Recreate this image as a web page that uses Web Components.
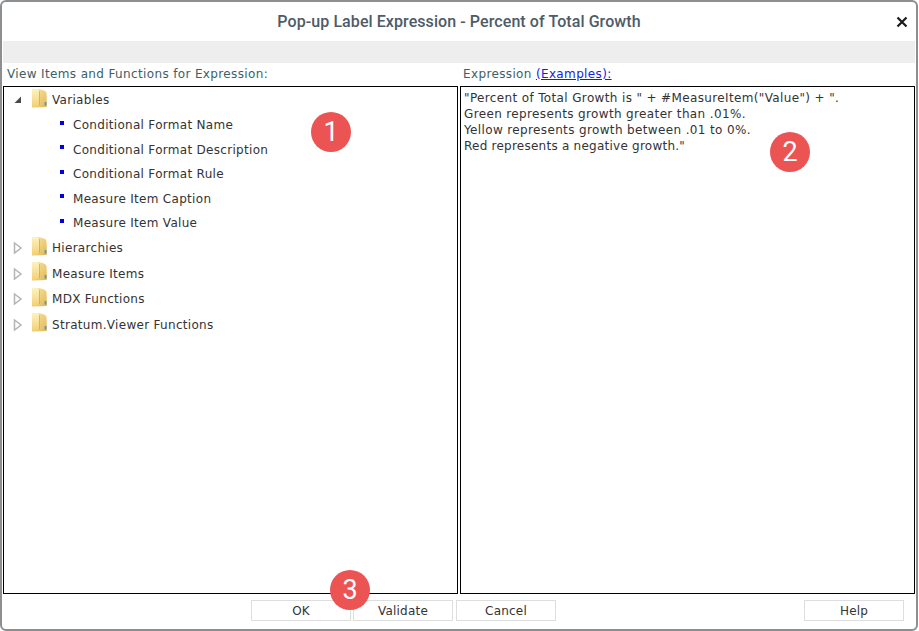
<!DOCTYPE html>
<html>
<head>
<meta charset="utf-8">
<title>Pop-up Label Expression</title>
<style>
  html, body { margin: 0; padding: 0; background: #fff; }
  body { width: 919px; height: 631px; overflow: hidden; font-family: "DejaVu Sans", sans-serif; }
</style>
</head>
<body>

<pop-dialog heading="Pop-up Label Expression - Percent of Total Growth">
  <expr-pane slot="left" label="View Items and Functions for Expression:" style="--label-pad:4px">
    <tree-node icon="open" text="Variables"></tree-node>
    <tree-leaf>Conditional Format Name</tree-leaf>
    <tree-leaf>Conditional Format Description</tree-leaf>
    <tree-leaf>Conditional Format Rule</tree-leaf>
    <tree-leaf>Measure Item Caption</tree-leaf>
    <tree-leaf>Measure Item Value</tree-leaf>
    <tree-node icon="closed" text="Hierarchies"></tree-node>
    <tree-node icon="closed" text="Measure Items"></tree-node>
    <tree-node icon="closed" text="MDX Functions"></tree-node>
    <tree-node icon="closed" text="Stratum.Viewer Functions"></tree-node>
  </expr-pane>
  <expr-pane slot="right" label="Expression " link="(Examples):" style="--label-pad:3px">
    <expr-text>
      <expr-line>"Percent of Total Growth is " + #MeasureItem("Value") + ".</expr-line>
      <expr-line>Green represents growth greater than .01%.</expr-line>
      <expr-line>Yellow represents growth between .01 to 0%.</expr-line>
      <expr-line style="letter-spacing:.24px">Red represents a negative growth."</expr-line>
    </expr-text>
  </expr-pane>
  <dlg-button slot="actions">OK</dlg-button>
  <dlg-button slot="actions">Validate</dlg-button>
  <dlg-button slot="actions" style="margin-left:1px">Cancel</dlg-button>
  <dlg-button slot="help">Help</dlg-button>
  <step-badge slot="badges" style="left:309px;top:110px">1</step-badge>
  <step-badge slot="badges" style="left:768px;top:130px">2</step-badge>
  <step-badge slot="badges" style="left:328px;top:568px">3</step-badge>
</pop-dialog>

<script>
class PopDialog extends HTMLElement {
  constructor() {
    super();
    this.attachShadow({ mode: "open" });
    const heading = this.getAttribute("heading") || "";
    this.shadowRoot.innerHTML = `
      <style>
        :host {
          display: flex; flex-direction: column; position: relative;
          box-sizing: border-box; width: 918px; height: 631px;
          border: 2px solid #8b8f92; border-radius: 6px; background: #fff;
        }
        .title {
          height: 39px; flex: none; display: flex; align-items: center; justify-content: center;
          font: 500 16px Roboto, sans-serif; color: #4d5b67; letter-spacing: .08px; position: relative;
        }
        .close { position: absolute; right: 8px; top: 14px; width: 12px; height: 12px; }
        .band { height: 22px; flex: none; background: #eeeeee; margin: 0 1px 0 1px; }
        .panes { flex: 1; min-height: 0; display: flex; gap: 2px; padding: 0 1px; }
        .footer { height: 35px; flex: none; display: flex; align-items: flex-start; padding: 6px 12px 0 249px; box-sizing: border-box; }
        .footer .actions { display: flex; gap: 2px; }
        .footer .help { margin-left: auto; }
      </style>
      <div class="title">
        <span>${heading}</span>
        <svg class="close" viewBox="0 0 12 12"><path d="M1.5 1.5 L10.5 10.5 M10.5 1.5 L1.5 10.5" stroke="#1b1b1b" stroke-width="2.2" fill="none"/></svg>
      </div>
      <div class="band"></div>
      <div class="panes"><slot name="left"></slot><slot name="right"></slot></div>
      <div class="footer">
        <div class="actions"><slot name="actions"></slot></div>
        <div class="help"><slot name="help"></slot></div>
      </div>
      <slot name="badges"></slot>
    `;
  }
}

class ExprPane extends HTMLElement {
  constructor() {
    super();
    this.attachShadow({ mode: "open" });
    const label = this.getAttribute("label") || "";
    const link = this.getAttribute("link");
    this.shadowRoot.innerHTML = `
      <style>
        :host { display: flex; flex-direction: column; width: 455px; min-height: 0; }
        .label {
          height: 23px; flex: none; box-sizing: border-box; padding: 3px 0 0 var(--label-pad, 4px); white-space: pre;
          font: 12px/17px "DejaVu Sans", sans-serif; color: #3c6165; letter-spacing: .36px;
        }
        a { color: #1a1ae0; text-decoration: underline; }
        .box { flex: 1; min-height: 0; border: 1px solid #000; box-sizing: border-box; overflow: hidden; padding-top: .3px; }
      </style>
      <div class="label">${label}${link ? `<a>${link}</a>` : ""}</div>
      <div class="box"><slot></slot></div>
    `;
  }
}

class TreeNode extends HTMLElement {
  constructor() {
    super();
    this.attachShadow({ mode: "open" });
    const open = this.getAttribute("icon") === "open";
    const text = this.getAttribute("text") || "";
    const arrow = open
      ? `<path d="M1.5 9 L8 2.5 L8 9 Z" fill="#4a4a4a"/>`
      : `<path d="M1.5 1 L8 6 L1.5 11 Z" fill="#fff" stroke="#b4b4b4" stroke-width="1.5"/>`;
    this.shadowRoot.innerHTML = `
      <style>
        :host {
          display: flex; align-items: center; height: 25.6px; padding-left: 9px;
          font: 12px "DejaVu Sans", sans-serif; color: #333; letter-spacing: .3px;
        }
        .arrow { width: 10px; height: 12px; flex: none; margin-right: 8px; }
        .folder { width: 17px; height: 21px; flex: none; margin-right: 4px; margin-top: -4px; }
      </style>
      <svg class="arrow" viewBox="0 0 10 12">${arrow}</svg>
      <svg class="folder" viewBox="0 0 17 21">
        <defs>
          <linearGradient id="back" x1="0" y1="0" x2="1" y2="1">
            <stop offset="0" stop-color="#fbe9a4"/>
            <stop offset="1" stop-color="#e2b755"/>
          </linearGradient>
          <linearGradient id="front" x1="0" y1="0" x2="0" y2="1">
            <stop offset="0" stop-color="#fdf3c0"/>
            <stop offset="1" stop-color="#f2cf72"/>
          </linearGradient>
        </defs>
        <path d="M1 2 Q1 1 2 1 L8 1 L13 2.5 Q15 3 15.5 5 L16 18 Q16 19 15 19 L2 19.5 Q1 19.5 1 18.5 Z" fill="url(#back)"/>
        <path d="M1 2 Q1 1 2 1 L6.5 1 L8.5 3 L8.5 17 L2 19.5 Q1 19.5 1 18.5 Z" fill="url(#front)"/>
        <path d="M8.5 3 L8.5 17" stroke="#cfa548" stroke-width="1" opacity=".7"/>
        <path d="M14.5 14 L14.5 17.5" stroke="#4d9ad6" stroke-width="1.8"/>
      </svg>
      <span>${text}</span>
    `;
  }
}

class TreeLeaf extends HTMLElement {
  constructor() {
    super();
    this.attachShadow({ mode: "open" });
    this.shadowRoot.innerHTML = `
      <style>
        :host {
          display: flex; align-items: center; height: 24.5px; padding-left: 56px;
          font: 12px "DejaVu Sans", sans-serif; color: #333; letter-spacing: .3px;
        }
        i { width: 4px; height: 4px; background: #0000d8; flex: none; margin: -5px 9px 0 0; }
      </style>
      <i></i><span><slot></slot></span>
    `;
  }
}

class ExprText extends HTMLElement {
  constructor() {
    super();
    this.attachShadow({ mode: "open" });
    this.shadowRoot.innerHTML = `
      <style>
        :host {
          display: flex; flex-direction: column; align-items: flex-start; padding: 3px 0 0 3px;
          font: 12px/16px "DejaVu Sans", sans-serif; color: #333; letter-spacing: .36px;
        }
      </style>
      <slot></slot>
    `;
  }
}

class ExprLine extends HTMLElement {
  constructor() {
    super();
    this.attachShadow({ mode: "open" });
    this.shadowRoot.innerHTML = `<style>:host { display: block; white-space: nowrap; }</style><slot></slot>`;
  }
}

class DlgButton extends HTMLElement {
  constructor() {
    super();
    this.attachShadow({ mode: "open" });
    this.shadowRoot.innerHTML = `
      <style>
        :host {
          display: flex; align-items: center; justify-content: center; box-sizing: border-box;
          width: 100px; height: 21px; background: #fff; border: 1px solid #dcdedf;
          font: 12px "DejaVu Sans", sans-serif; color: #333; letter-spacing: .2px;
        }
      </style>
      <slot></slot>
    `;
  }
}

class StepBadge extends HTMLElement {
  constructor() {
    super();
    this.attachShadow({ mode: "open" });
    this.shadowRoot.innerHTML = `
      <style>
        :host {
          display: flex; align-items: center; justify-content: center; position: absolute;
          width: 40px; height: 40px; border-radius: 50%; background: #ec5454; color: #fff;
          font: 27px Roboto, sans-serif;
        }
      </style>
      <slot></slot>
    `;
  }
}

customElements.define("pop-dialog", PopDialog);
customElements.define("expr-pane", ExprPane);
customElements.define("tree-node", TreeNode);
customElements.define("tree-leaf", TreeLeaf);
customElements.define("expr-text", ExprText);
customElements.define("expr-line", ExprLine);
customElements.define("dlg-button", DlgButton);
customElements.define("step-badge", StepBadge);
</script>
</body>
</html>
